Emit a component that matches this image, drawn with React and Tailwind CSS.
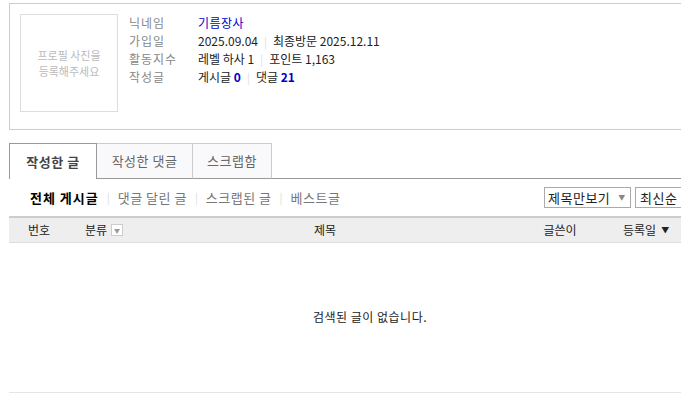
const FONT = { fontFamily: '"Noto Sans CJK KR", "Noto Sans", sans-serif' };

function Sep({ wide }) {
  return <span className={`${wide ? 'mx-[8px]' : 'mx-[6px]'} text-[#ddd] text-[11px] tracking-normal`}>|</span>;
}

function InfoRow({ label, children }) {
  return (
    <div className="flex h-[18px] items-center">
      <span className="w-[69px] text-[#888] tracking-[1px]">{label}</span>
      <span className="flex items-center text-[#222]">{children}</span>
    </div>
  );
}

export default function App() {
  return (
    <div className="w-[681px] h-[403px] overflow-hidden bg-white text-[12px]" style={FONT}>
      <div className="ml-[9px] w-[722px] pt-[3px]">
        {/* Profile */}
        <div className="flex h-[127px] border border-[#ccc] pl-[10px] pt-[10px]">
          <div className="w-[98px] h-[98px] border border-[#ddd] flex items-center justify-center text-center text-[11px] leading-[16px] text-[#bbb]">
            프로필 사진을
            <br />
            등록해주세요
          </div>
          <div className="ml-[11px] flex flex-col">
            <InfoRow label="닉네임">
              <span className="text-[#0000cc] tracking-[0.5px]">기름장사</span>
            </InfoRow>
            <InfoRow label="가입일">
              2025.09.04
              <Sep />
              최종방문 2025.12.11
            </InfoRow>
            <InfoRow label="활동지수">
              레벨 하사 1
              <Sep />
              포인트 1,163
            </InfoRow>
            <InfoRow label="작성글">
              게시글&nbsp;<b className="text-[#0000cc]">0</b>
              <Sep />
              댓글&nbsp;<b className="text-[#0000cc]">21</b>
            </InfoRow>
          </div>
        </div>

        {/* Tabs */}
        <div className="mt-[13px] flex h-[36px] items-stretch">
          <div className="w-[88px] border border-b-0 border-[#999] bg-white flex items-center justify-center text-[13px] font-bold text-[#444] tracking-[0.5px]">
            작성한 글
          </div>
          <div className="w-[96px] border-t border-r border-b border-t-[#ccc] border-r-[#ccc] border-b-[#999] bg-[#f9f9fc] flex items-center justify-center text-[13px] text-[#666] tracking-[0.5px]">
            작성한 댓글
          </div>
          <div className="w-[79px] border-t border-r border-b border-t-[#ccc] border-r-[#ccc] border-b-[#999] bg-[#f9f9fc] flex items-center justify-center text-[13px] text-[#666] tracking-[0.5px]">
            스크랩함
          </div>
          <div className="flex-1 border-b border-[#999]" />
        </div>

        {/* Sub nav + selects */}
        <div className="flex h-[37px] items-center">
          <div className="ml-[21px] flex items-center text-[13px] text-[#777] tracking-[0.5px]">
            <span className="font-bold text-black tracking-[1px]">전체 게시글</span>
            <Sep wide />
            <span>댓글 달린 글</span>
            <Sep wide />
            <span>스크랩된 글</span>
            <Sep wide />
            <span>베스트글</span>
          </div>
          <div className="ml-auto mr-[36px] flex items-center gap-[4px] text-[13px] text-[#222]">
            <div className="flex h-[21px] w-[87px] items-center border border-[#aaa] pl-[3px] tracking-[0.5px]">
              제목만보기
              <span className="ml-[8px] text-[7px] text-[#888]">▼</span>
            </div>
            <div className="flex h-[21px] w-[60px] items-center border border-[#aaa] pl-[4px] tracking-[0.5px]">
              최신순
            </div>
          </div>
        </div>

        {/* Table header */}
        <div className="flex h-[27px] items-center border-t-2 border-b border-t-[#ccc] border-b-[#ddd] bg-[#eee] text-[#222]">
          <div className="w-[60px] text-center">번호</div>
          <div className="w-[61px] pl-[16px] flex items-center">
            분류
            <span className="ml-[4px] flex h-[12px] w-[12px] items-center justify-center border border-[#ccc] bg-white text-[6px] text-[#999]">▼</span>
          </div>
          <div className="flex-1 text-center">제목</div>
          <div className="w-[80px] text-center">글쓴이</div>
          <div className="w-[131px] pl-[23px] flex items-center">
            등록일
            <span className="ml-[5px] text-[8px]">▼</span>
          </div>
        </div>

        {/* Empty */}
        <div className="flex h-[150px] items-center justify-center border-b border-[#e5e5e5] text-[#222]">
          <span className="-mt-[1px] tracking-[0.5px]">검색된 글이 없습니다.</span>
        </div>
      </div>
    </div>
  );
}
